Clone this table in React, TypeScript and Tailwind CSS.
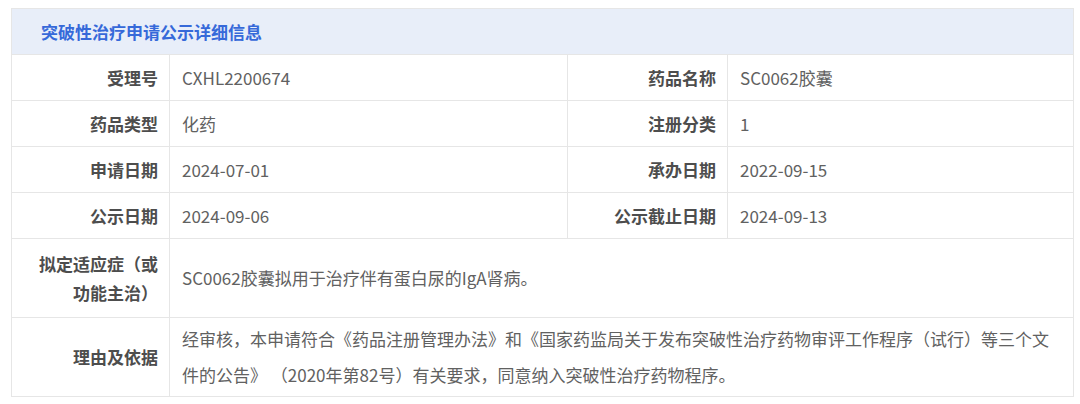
import React from 'react';

const rows: { label: string; value: string; label2: string; value2: string }[] = [
    { label: '受理号', value: 'CXHL2200674', label2: '药品名称', value2: 'SC0062胶囊' },
    { label: '药品类型', value: '化药', label2: '注册分类', value2: '1' },
    { label: '申请日期', value: '2024-07-01', label2: '承办日期', value2: '2022-09-15' },
    { label: '公示日期', value: '2024-09-06', label2: '公示截止日期', value2: '2024-09-13' },
];

const labelCls = 'border border-[#e6e6e6] pr-[11px] text-right align-middle text-[17px] font-bold text-[#4d4d4d]';
const valueCls = 'border border-[#e6e6e6] pl-[12px] text-left align-middle text-[17px] text-[#616161]';

export default function App() {
    return (
        <div
            className="min-h-[404px] w-[1080px] bg-white pl-[11px] pt-[8px]"
            style={{ fontFamily: '"Noto Sans CJK SC", "Noto Sans", sans-serif' }}
        >
            <table className="w-[1063px] table-fixed border-collapse">
                <colgroup>
                    <col className="w-[158px]" />
                    <col className="w-[398px]" />
                    <col className="w-[160px]" />
                    <col />
                </colgroup>
                <tbody>
                    <tr className="h-[46px]">
                        <td colSpan={4} className="border border-[#e6e6e6] bg-[#e8eef9] pl-[29px] text-[17px] font-bold text-[#3669d9]">
                            突破性治疗申请公示详细信息
                        </td>
                    </tr>
                    {rows.map((r) => (
                        <tr key={r.label} className="h-[46px]">
                            <td className={labelCls}>{r.label}</td>
                            <td className={valueCls}>{r.value}</td>
                            <td className={labelCls}>{r.label2}</td>
                            <td className={valueCls}>{r.value2}</td>
                        </tr>
                    ))}
                    <tr className="h-[79px]">
                        <td className={`${labelCls} leading-[29px]`}>
                            拟定适应症（或
                            <br />
                            功能主治）
                        </td>
                        <td colSpan={3} className={valueCls}>
                            SC0062胶囊拟用于治疗伴有蛋白尿的IgA肾病。
                        </td>
                    </tr>
                    <tr className="h-[79px]">
                        <td className={labelCls}>理由及依据</td>
                        <td colSpan={3} className={`${valueCls} leading-[36px]`}>
                            经审核，本申请符合《药品注册管理办法》和《国家药监局关于发布突破性治疗药物审评工作程序（试行）等三个文
                            <br />
                            件的公告》 （2020年第82号）有关要求，同意纳入突破性治疗药物程序。
                        </td>
                    </tr>
                </tbody>
            </table>
        </div>
    );
}
